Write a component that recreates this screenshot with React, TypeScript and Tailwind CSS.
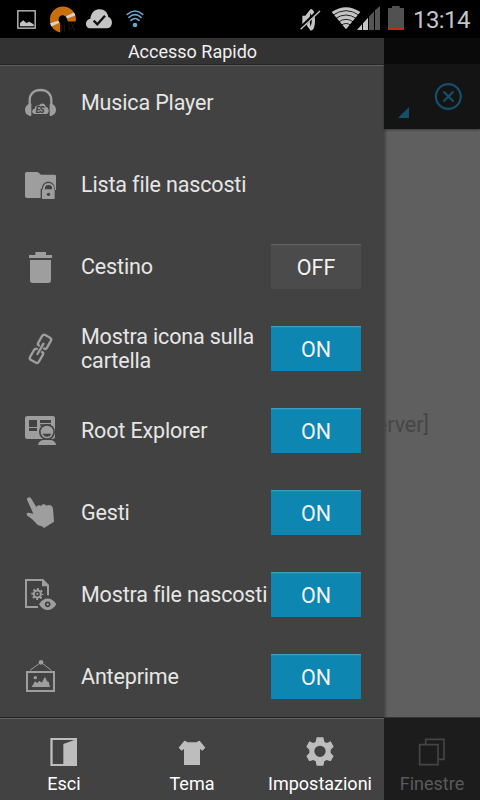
import type { ReactNode } from "react";

interface QuickItem {
  label: string;
  icon: ReactNode;
  enabled?: boolean;
}

interface IconProps {
  viewBox: string;
  className: string;
  children: ReactNode;
}

function Icon({ viewBox, className, children }: IconProps) {
  return (
    <svg viewBox={viewBox} className={`shrink-0 ${className}`} fill="currentColor" aria-hidden="true">
      {children}
    </svg>
  );
}

const BG = "#424242";

const HeadphonesIcon = (
  <Icon viewBox="36 30 108 108" className="size-9">
    <path d="M59 94V77C59 56 73 45 91.5 45S124 56 124 77V94" fill="none" stroke="currentColor" strokeWidth="7" />
    <path d="M64 86V123H60C50 121 45 114 45 104.500S50 88 60 86ZM119 86V123H123C133 121 138 114 138 104.500S133 88 123 86Z" />
    <path d="M75 117C64 117 64 102 74 101C75 93 81 90 87 92C91 83 106 83 107 95C119 96 119 117 108 117Z" />
    <text x="77" y="115" fill={BG} fontFamily="Roboto, sans-serif" fontSize="25" fontWeight="900" fontStyle="italic" letterSpacing="-2">
      ES
    </text>
  </Icon>
);

const LockedFolderIcon = (
  <Icon viewBox="36 276 108 108" className="size-9">
    <path d="M50 291H82C87 291 89 299 94 299H132Q138 299 138 305V363Q138 369 132 369H51Q45 369 45 363V297Q45 291 50 291Z" />
    <path d="M92 373V341H96C95 313 135 313 134 341H138V373Z" fill={BG} />
    <path d="M102 345V339C102 323 129 323 129 339V345" fill="none" stroke="currentColor" strokeWidth="6" />
    <rect x="96" y="343" width="38" height="29" rx="2" />
    <path d="M135 300Q138 301 138 305V345H135Z" />
    <circle cx="115.500" cy="358" r="5" fill={BG} />
  </Icon>
);

const TrashIcon = (
  <Icon viewBox="36 27 108 108" className="size-9">
    <path d="M57 45H76V36H108V45H126V54H57ZM60 60H123V121Q123 129 115 129H68Q60 129 60 121Z" />
  </Icon>
);

const LinkIcon = (
  <Icon viewBox="36 273 108 108" className="size-9">
    <g transform="translate(91.500 326.500) rotate(30)" fill="none" stroke="currentColor" strokeWidth="7">
      <path d="M-6 -6H-9Q-15 -6 -15 -12V-36Q-15 -43 -8 -43H8Q15 -43 15 -36V-12Q15 -6 9 -6H6" />
      <path d="M-6 6H-9Q-15 6 -15 12V36Q-15 43 -8 43H8Q15 43 15 36V12Q15 6 9 6H6" />
      <path d="M0 -18V18" strokeLinecap="round" />
    </g>
  </Icon>
);

const RootIcon = (
  <Icon viewBox="36 39 108 108" className="size-9">
    <rect x="45" y="48" width="90" height="69" rx="7" />
    <path d="M57 60H81V81H57ZM57 84H81V93H57ZM90 60H123V69H90ZM90 73H123V77H90Z" fill={BG} />
    <path d="M80 136C82 123 90 118 96 117H126C134 118 140 124 142 136Z" fill={BG} />
    <path d="M84 135C86 122 96 119 111 119S136 122 138 135Z" />
    <circle cx="111" cy="96" r="24" fill={BG} />
    <circle cx="111" cy="96" r="19" />
    <path d="M98 101H124C121 113 101 113 98 101Z" fill={BG} />
  </Icon>
);

const HandIcon = (
  <Icon viewBox="36 285 108 108" className="size-9">
    <path d="M51 299C50 293 59 289 63 295L79 321C82 316 88 314 93 318C97 311 105 312 108 317C116 312 129 315 129 326L132 365L102 384C97 378 91 378 85 376C78 372 73 362 65 356L52 347C48 342 50 338 56 338L70 341Z" />
  </Icon>
);

const HiddenFileIcon = (
  <Icon viewBox="36 36 108 108" className="size-9">
    <path d="M84 126H48V45H97L114 63V91" fill="none" stroke="currentColor" strokeWidth="6" />
    <path d="M96 42H99L117 60V64H96Z" />
    <circle cx="82" cy="87" r="10.500" fill="none" stroke="currentColor" strokeWidth="6" />
    <circle cx="82" cy="87" r="15" fill="none" stroke="currentColor" strokeWidth="6" strokeDasharray="5.890 5.890" strokeDashoffset="2.900" />
    <circle cx="82" cy="87" r="3" />
    <path d="M83 118Q113 82 143 118Q113 152 83 118Z" fill={BG} />
    <path d="M87 118C100 95 126 95 139 118C126 141 100 141 87 118Z" />
    <circle cx="113" cy="118" r="6" fill="none" stroke={BG} strokeWidth="5" />
  </Icon>
);

const PictureIcon = (
  <Icon viewBox="36 282 108 108" className="size-9">
    <path d="M60 316L93 292L124 316" fill="none" stroke="currentColor" strokeWidth="3" />
    <circle cx="93" cy="292" r="7" />
    <rect x="51" y="321" width="81" height="57" fill="none" stroke="currentColor" strokeWidth="6" />
    <circle cx="76" cy="338" r="5" />
    <path d="M65 366L75 349L82 354L88 347L95 353L105 335L111 349L116 350L120 366Z" />
  </Icon>
);

const items: QuickItem[] = [
  { label: "Musica Player", icon: HeadphonesIcon },
  { label: "Lista file nascosti", icon: LockedFolderIcon },
  { label: "Cestino", icon: TrashIcon, enabled: false },
  { label: "Mostra icona sulla cartella", icon: LinkIcon, enabled: true },
  { label: "Root Explorer", icon: RootIcon, enabled: true },
  { label: "Gesti", icon: HandIcon, enabled: true },
  { label: "Mostra file nascosti", icon: HiddenFileIcon, enabled: true },
  { label: "Anteprime", icon: PictureIcon, enabled: true },
];

function StatusBar() {
  return (
    <header className="flex h-[38px] shrink-0 items-center bg-black pl-[17px] pr-2 text-[#c4c4c4]">
      <Icon viewBox="51 27 57 57" className="h-[19px] w-[19px]">
        <rect x="53.500" y="29.500" width="52" height="52" fill="none" stroke="currentColor" strokeWidth="4" />
        <path d="M60 76V66L70 58L79 66L88 62L101 70V76Z" />
      </Icon>
      <Icon viewBox="150 17 78 80" className="ml-[14px] h-[27px] w-[26px] text-[#c66f0c]">
        <path d="M181 96C161 92 150 76 150 57C150 35 167 18 189 18S228 35 228 57L227 63L203 63C202 51 195 45 188 45C180 45 175 51 176 60C176 64 179 66 181 67Z" />
        <path d="M198 47L222 36L226 45L201 54ZM150 68L175 61L178 67L154 78Z" fill="#d8d4cd" />
        <circle cx="188" cy="56" r="11" fill="#000" />
        <path d="M182 67H198V96H182Z" fill="#000" />
        <path d="M185 72V94M194 72V94M207 68V90M213 66L224 91M224 67L211 88" stroke="#21180d" strokeWidth="3" />
      </Icon>
      <Icon viewBox="258 29 78 60" className="ml-2.5 h-5 w-[26px]">
        <path d="M272 87C253 87 253 61 271 58C274 37 287 30 299 30C314 30 323 40 325 53C341 58 339 87 321 87Z" />
        <path d="M281 64L292 75L315 49" fill="none" stroke="#111" strokeWidth="7" />
      </Icon>
      <Icon viewBox="378 30 54 54" className="ml-3.5 h-[18px] w-[18px] text-[#69a5cf]">
        <path d="M382 43Q405 23 428 43M387 52Q405 36 423 52M393 61Q405 50 417 61" fill="none" stroke="currentColor" strokeWidth="5" strokeLinecap="round" />
        <circle cx="405" cy="75" r="7" />
      </Icon>
      <div className="ml-auto flex items-center">
        <Icon viewBox="180 24 63 72" className="mt-px h-6 w-[21px]">
          <path d="M187 47H196L212 27Q224 25 225 58T212 92L198 73H187Z" />
          <path d="M212 38Q219 58 212 80Q206 58 212 38Z" fill="#000" />
          <path d="M180 86L238 30" stroke="#000" strokeWidth="10" />
          <path d="M182 88L240 33" stroke="currentColor" strokeWidth="4" />
        </Icon>
        <Icon viewBox="273 18 150 75" className="-mt-px ml-[10px] h-[25px] w-[50px]">
          <path d="M275 36Q318 7 361 36L318 88Z" />
          <path d="M278 46Q318 18 358 46M286 56Q318 34 350 56M295 66Q318 50 341 66M303 76Q318 65 333 76" fill="none" stroke="#000" strokeWidth="2.500" />
          <path d="M351 90L366 73V90ZM369 70L384 53V90H369Z" />
          <path d="M387 50L402 34V90H387ZM405 31L420 18V90H405Z" fill="#555" />
        </Icon>
        <Icon viewBox="444 18 48 72" className="-mt-0.5 ml-[7px] h-6 w-4 text-[#515151]">
          <path d="M444 24H456V18H479V24H492V90H444Z" />
          <path d="M444 84H492V90H444Z" fill="#c62b08" />
        </Icon>
        <span className="ml-[9px] mt-0.5 w-[59px] text-[24px] leading-none tracking-[-0.6px]">13:14</span>
      </div>
    </header>
  );
}

function Toggle({ enabled }: { enabled: boolean }) {
  return (
    <button
      className={`-mt-px h-[45px] w-[90px] shrink-0 border-t pt-px text-[21.500px] leading-none text-[#f2f2f2] ${
        enabled
          ? "border-[#3d9dbe] bg-[#0d86b1] shadow-[inset_0_1px_0_#1c8db5]"
          : "border-[#606060] bg-[#4b4b4b] shadow-[inset_0_1px_0_#515151]"
      }`}
    >
      {enabled ? "ON" : "OFF"}
    </button>
  );
}

function QuickRow({ label, icon, enabled }: QuickItem) {
  return (
    <li className="flex h-[82px] shrink-0 items-center pl-[22px] pr-[23px] text-[#9e9e9e] last:-mb-px">
      {icon}
      <span className="ml-[23px] w-[190px] text-[21.500px] leading-6 tracking-[-0.15px] text-[#e6e6e6]">{label}</span>
      {enabled !== undefined ? <Toggle enabled={enabled} /> : null}
    </li>
  );
}

function BottomBar() {
  return (
    <nav className="grid h-[83px] shrink-0 grid-cols-3 border-t border-[#212121] text-[18px] leading-5 text-white">
      <button className="flex flex-col items-center border-t border-[#606060] pt-[18px]">
        <Icon viewBox="147 96 90 90" className="size-[30px] text-[#bdbdbd]">
          <path d="M151 99H231V183H151ZM158 105V177H190V117L223 105Z" fillRule="evenodd" />
        </Icon>
        <span className="mt-[7px]">Esci</span>
      </button>
      <button className="flex flex-col items-center border-t border-[#606060] pt-[18px]">
        <Icon viewBox="531 96 90 90" className="size-[30px] text-[#bdbdbd]">
          <path d="M553 107C558 107 561 112 565 112H588C592 112 594 107 599 107L616 128L607 137L600 132V180H552V132L545 137L536 128Z" />
        </Icon>
        <span className="mt-[7px]">Tema</span>
      </button>
      <button className="flex flex-col items-center border-t border-[#606060] pt-[18px]">
        <Icon viewBox="193 96 90 90" className="size-[30px] text-[#bdbdbd]">
          <path
            d="M228 97H248L251 110L258 114L270 109L279 125L270 134V144L279 153L270 169L258 165L251 169L248 182H228L225 169L218 165L206 169L197 153L206 144V134L197 125L206 109L218 114L225 110ZM238 122A17 17 0 1 0 238 156A17 17 0 1 0 238 122Z"
            fillRule="evenodd"
          />
        </Icon>
        <span className="mt-[7px]">Impostazioni</span>
      </button>
    </nav>
  );
}

function Drawer() {
  return (
    <aside className="flex w-[384px] shrink-0 flex-col bg-[#424242]">
      <h1 className="h-[27px] shrink-0 border-b border-[#252525] bg-[#333] pl-px text-center text-[18px] leading-7 text-[#f0f0f0]">
        Accesso Rapido
      </h1>
      <ul className="flex h-[652px] flex-col justify-end border-t border-[#606060]">
        {items.map((item) => (
          <QuickRow key={item.label} {...item} />
        ))}
      </ul>
      <BottomBar />
    </aside>
  );
}

function DimmedPage() {
  return (
    <main className="flex flex-1 flex-col bg-[#5f5f5f] shadow-[inset_2px_0_2px_#00000040]">
      <div className="h-[26px] bg-[#0a0a0a]" />
      <div className="flex h-[65px] items-center bg-[#141414] pl-[14px] text-[#15506a] shadow-[0_1px_2px_#00000066]">
        <Icon viewBox="0 0 11 11" className="mt-8 size-[11px]">
          <path d="M11 0V11H0Z" />
        </Icon>
        <Icon viewBox="0 0 28 28" className="ml-[25px] size-7">
          <g fill="none" stroke="currentColor" strokeWidth="2.200">
            <circle cx="14.300" cy="13.500" r="12.400" />
            <path d="M9.500 8.500L19.500 18.500M19.500 8.500L9.500 18.500" />
          </g>
        </Icon>
      </div>
      <div className="flex flex-1 items-center justify-start overflow-hidden pt-[5px] text-[21.500px] tracking-[-0.1px] text-[#464646]">
        <span className="-ml-2">erver]</span>
      </div>
      <div className="flex h-[83px] flex-col items-center border-t border-[#343434] bg-[#1c1c1c] pt-[19px] text-[18px] leading-5 text-[#5a5a5a]">
        <Icon viewBox="528 96 90 90" className="size-[30px] text-[#454545]">
          <path d="M536 119H591V179H536ZM554 119V103H609V163H592" fill="none" stroke="currentColor" strokeWidth="5" />
        </Icon>
        <span className="mt-[7px]">Finestre</span>
      </div>
    </main>
  );
}

export default function App() {
  return (
    <div className="flex h-[800px] w-[480px] flex-col overflow-hidden font-['Roboto',sans-serif]">
      <StatusBar />
      <div className="flex flex-1">
        <Drawer />
        <DimmedPage />
      </div>
    </div>
  );
}
